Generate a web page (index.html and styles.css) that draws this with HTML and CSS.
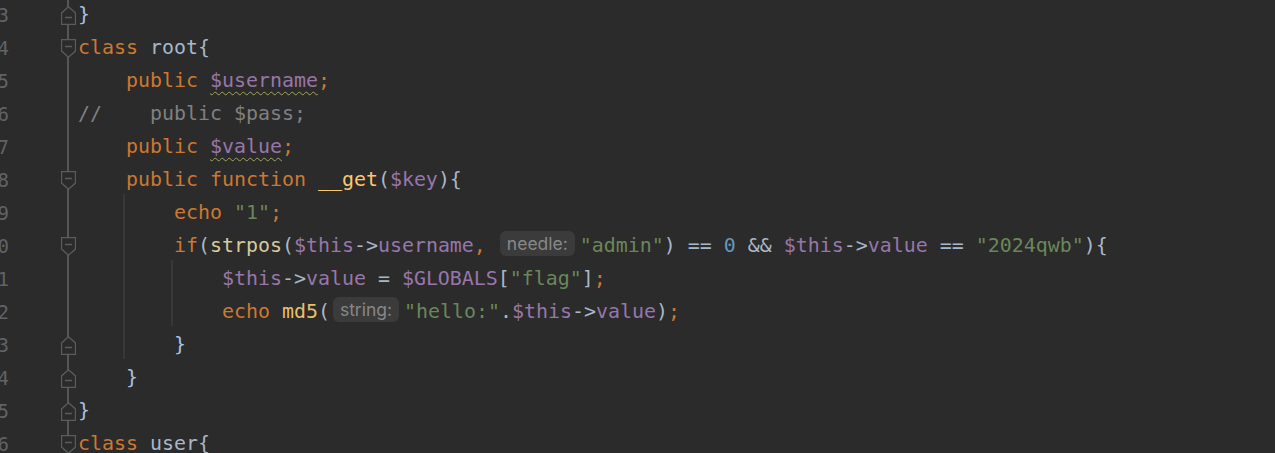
FILE: index.html
```html
<!DOCTYPE html>
<html>
<head>
<meta charset="utf-8">
<link rel="stylesheet" href="styles.css">
</head>
<body>
<div class="editor">
  <div class="line"><span class="ln">3</span><span class="fold"><svg class="mk" viewBox="0 0 15 19" width="15" height="19"><path d="M0.5 18.5H14.5V7L7.5 0.8L0.5 7Z"/><line x1="4" y1="11.5" x2="11" y2="11.5"/></svg></span><span class="code"><span class="br">}</span></span></div>
  <div class="line"><span class="ln">4</span><span class="fold"><svg class="mk" viewBox="0 0 15 19" width="15" height="19"><path d="M0.5 0.5H14.5V12L7.5 18.2L0.5 12Z"/><line x1="4" y1="7.5" x2="11" y2="7.5"/></svg></span><span class="code"><span class="kw">class</span> root{</span></div>
  <div class="line"><span class="ln">5</span><span class="fold"></span><span class="code">    <span class="kw">public</span> <span class="var warn">$username</span><span class="kw">;</span></span></div>
  <div class="line"><span class="ln">6</span><span class="fold"></span><span class="code"><span class="cm">//    public $pass;</span></span></div>
  <div class="line"><span class="ln">7</span><span class="fold"></span><span class="code">    <span class="kw">public</span> <span class="var warn">$value</span><span class="kw">;</span></span></div>
  <div class="line"><span class="ln">8</span><span class="fold"><svg class="mk" viewBox="0 0 15 19" width="15" height="19"><path d="M0.5 0.5H14.5V12L7.5 18.2L0.5 12Z"/><line x1="4" y1="7.5" x2="11" y2="7.5"/></svg></span><span class="code">    <span class="kw">public function</span> <span class="fn">__get</span>(<span class="var">$key</span>){</span></div>
  <div class="line"><span class="ln">9</span><span class="fold"></span><span class="code g1">        <span class="kw">echo</span> <span class="str">"1"</span><span class="kw">;</span></span></div>
  <div class="line"><span class="ln">10</span><span class="fold"><svg class="mk" viewBox="0 0 15 19" width="15" height="19"><path d="M0.5 0.5H14.5V12L7.5 18.2L0.5 12Z"/><line x1="4" y1="7.5" x2="11" y2="7.5"/></svg></span><span class="code g1">        <span class="kw">if</span>(<span class="call">strpos</span>(<span class="var">$this</span>-&gt;<span class="var">username</span><span class="kw">,</span> <span class="hint hint-needle">needle:</span><span class="str">"admin"</span>) == <span class="num">0</span> &amp;&amp; <span class="var">$this</span>-&gt;<span class="var">value</span> == <span class="str">"2024qwb"</span>){</span></div>
  <div class="line"><span class="ln">11</span><span class="fold"></span><span class="code g1 g2">            <span class="var">$this</span>-&gt;<span class="var">value</span> = <span class="var">$GLOBALS</span>[<span class="str">"flag"</span>]<span class="kw">;</span></span></div>
  <div class="line"><span class="ln">12</span><span class="fold"></span><span class="code g1 g2">            <span class="kw">echo</span> <span class="call2">md5</span>(<span class="hint hint-string">string:</span><span class="str">"hello:"</span>.<span class="var">$this</span>-&gt;<span class="var">value</span>)<span class="kw">;</span></span></div>
  <div class="line"><span class="ln">13</span><span class="fold"><svg class="mk" viewBox="0 0 15 19" width="15" height="19"><path d="M0.5 18.5H14.5V7L7.5 0.8L0.5 7Z"/><line x1="4" y1="11.5" x2="11" y2="11.5"/></svg></span><span class="code g1">        <span class="br">}</span></span></div>
  <div class="line"><span class="ln">14</span><span class="fold"><svg class="mk" viewBox="0 0 15 19" width="15" height="19"><path d="M0.5 18.5H14.5V7L7.5 0.8L0.5 7Z"/><line x1="4" y1="11.5" x2="11" y2="11.5"/></svg></span><span class="code">    <span class="br">}</span></span></div>
  <div class="line"><span class="ln">15</span><span class="fold"><svg class="mk" viewBox="0 0 15 19" width="15" height="19"><path d="M0.5 18.5H14.5V7L7.5 0.8L0.5 7Z"/><line x1="4" y1="11.5" x2="11" y2="11.5"/></svg></span><span class="code"><span class="br">}</span></span></div>
  <div class="line"><span class="ln">16</span><span class="fold"><svg class="mk" viewBox="0 0 15 19" width="15" height="19"><path d="M0.5 0.5H14.5V12L7.5 18.2L0.5 12Z"/><line x1="4" y1="7.5" x2="11" y2="7.5"/></svg></span><span class="code"><span class="kw">class</span> user{</span></div>
</div>
</body>
</html>
```
FILE: styles.css
```css
html, body {
  margin: 0;
  padding: 0;
  background: #2b2b2b;
  overflow: hidden;
  width: 1275px;
  height: 453px;
}

.editor {
  display: flex;
  flex-direction: column;
  margin-top: -4px;
  font-family: "DejaVu Sans Mono", "Liberation Mono", monospace;
  font-size: 19.93px;
  color: #a9b7c6;
}

.line {
  display: flex;
  height: 33px;
  flex: none;
}

.ln {
  width: 40px;
  margin-left: -31px;
  flex: none;
  text-align: right;
  color: #606366;
  font-size: 19px;
  padding-top: 5px;
  line-height: 28px;
  box-sizing: border-box;
  height: 33px;
}

.fold {
  width: 69px;
  flex: none;
  height: 33px;
  box-sizing: border-box;
  padding-left: 52px;
  padding-top: 10px;
  background: linear-gradient(to right, transparent 58px, #545658 58px, #545658 60px, transparent 60px);
}

.mk {
  display: block;
}

.mk path {
  fill: #2b2b2b;
  stroke: #5a5d5f;
  stroke-width: 1.3;
}

.mk line {
  stroke: #5a5d5f;
  stroke-width: 1.5;
}

.code {
  white-space: pre;
  flex: 1;
  height: 33px;
  box-sizing: border-box;
  padding-top: 5px;
  line-height: 28px;
}

.g1 {
  background: linear-gradient(to right, transparent 45px, #383838 45px, #383838 47px, transparent 47px);
}

.g1.g2 {
  background:
    linear-gradient(to right, transparent 45px, #383838 45px, #383838 47px, transparent 47px),
    linear-gradient(to right, transparent 93px, #383838 93px, #383838 95px, transparent 95px);
}

.kw { color: #cc7832; }
.var { color: #9876aa; }
.str { color: #6a8759; }
.num { color: #6897bb; }
.cm { color: #808080; }
.fn { color: #ffc66d; }
.call { color: #d9c99a; }
.call2 { color: #e8bf6a; }
.br { color: #a9c1e0; }

.warn {
  text-decoration-line: underline;
  text-decoration-style: wavy;
  text-decoration-color: #a3a35c;
  text-decoration-thickness: 1px;
  text-underline-offset: 4px;
}

.hint {
  display: inline-block;
  vertical-align: top;
  margin-top: -1px;
  height: 25px;
  line-height: 25px;
  padding: 0 7px;
  border-radius: 6px;
  background: #3b3b3b;
  color: #878787;
  font-family: Inter, "Noto Sans", sans-serif;
  font-size: 17.5px;
}

.hint-needle {
  margin-left: 2px;
  margin-right: 5px;
}

.hint-string {
  margin-left: 3px;
  margin-right: 5px;
}
```
